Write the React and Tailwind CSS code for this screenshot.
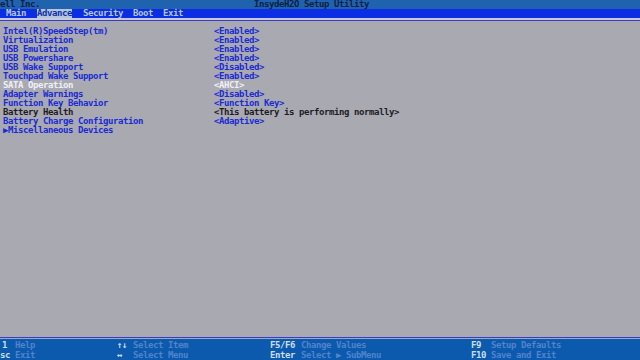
import React from "react";

const rows = [
  { l: "Intel(R)SpeedStep(tm)", v: "<Enabled>" },
  { l: "Virtualization", v: "<Enabled>" },
  { l: "USB Emulation", v: "<Enabled>" },
  { l: "USB Powershare", v: "<Enabled>" },
  { l: "USB Wake Support", v: "<Disabled>" },
  { l: "Touchpad Wake Support", v: "<Enabled>" },
  { l: "SATA Operation", v: "<AHCI>", sel: true },
  { l: "Adapter Warnings", v: "<Disabled>" },
  { l: "Function Key Behavior", v: "<Function Key>" },
  { l: "Battery Health", v: "<This battery is performing normally>", dark: true },
  { l: "Battery Charge Configuration", v: "<Adaptive>" },
];

export default function App() {
  const font = {
    fontFamily: '"DejaVu Sans Mono", "Liberation Mono", monospace',
  };
  return (
    <div
      className="w-[640px] h-[360px] flex flex-col overflow-hidden bg-[#a9a9b2] text-[9px] leading-[9px] font-bold tracking-[-0.42px] whitespace-pre"
      style={font}
    >
      {/* title bar */}
      <div className="h-[9px] bg-[#1f63ae] text-[#0d1f45] flex shrink-0">
        <span className="w-[254px]">ell Inc.</span>
        <span>InsydeH2O Setup Utility</span>
      </div>
      {/* menu bar */}
      <div className="h-[9px] bg-[#0b2ee4] text-[#b4c4e6] flex shrink-0 pl-[6px]">
        <span>Main</span>
        <span className="ml-[11px] bg-[#b3c6de] text-[#1230a6]">Advance</span>
        <span className="ml-[11px]">Security</span>
        <span className="ml-[10px]">Boot</span>
        <span className="ml-[10px]">Exit</span>
      </div>
      <div className="h-[2px] bg-[#c6c8e4] shrink-0" />
      <div className="h-px bg-[#3a3cc4] shrink-0" />
      {/* body */}
      <div className="flex-1 flex flex-col pt-[6px] pl-[3px]">
        {rows.map((r) => (
          <div key={r.l} className="flex h-[9px]">
            <span
              className={
                "w-[211px] " +
                (r.sel ? "text-[#eef0f8]" : r.dark ? "text-[#1c1c24]" : "text-[#1a2bd2]")
              }
            >
              {r.l}
            </span>
            <span
              className={
                r.sel ? "text-[#eef0f8]" : r.dark ? "text-[#1c1c24]" : "text-[#1a2bd2]"
              }
            >
              {r.v}
            </span>
          </div>
        ))}
        <div className="flex h-[9px] text-[#1a2bd2]">
          <span>▶Miscellaneous Devices</span>
        </div>
      </div>
      <div className="h-px bg-[#3a3cc4] shrink-0" />
      <div className="h-px bg-[#9aa8cc] shrink-0" />
      {/* footer */}
      <div className="h-[21px] bg-[#0b5aad] shrink-0 flex flex-col pt-[2px] text-[#5283cc]">
        <div className="flex h-[9px]">
          <span className="w-[117px] flex">
            <span className="w-[15px] pl-[2px] text-[#d0dcf6]">1</span>
            <span>Help</span>
          </span>
          <span className="w-[153px] flex">
            <span className="w-[16px] text-[#d0dcf6]">↑↓</span>
            <span>Select Item</span>
          </span>
          <span className="w-[201px] flex">
            <span className="w-[31px] text-[#d0dcf6]">F5/F6</span>
            <span>Change Values</span>
          </span>
          <span className="flex">
            <span className="w-[20px] text-[#d0dcf6]">F9</span>
            <span>Setup Defaults</span>
          </span>
        </div>
        <div className="flex h-[9px] mt-px">
          <span className="w-[117px] flex">
            <span className="w-[15px] text-[#d0dcf6]">sc</span>
            <span>Exit</span>
          </span>
          <span className="w-[153px] flex">
            <span className="w-[16px] text-[#d0dcf6]">↔</span>
            <span>Select Menu</span>
          </span>
          <span className="w-[201px] flex">
            <span className="w-[31px] text-[#d0dcf6]">Enter</span>
            <span>Select ▶ SubMenu</span>
          </span>
          <span className="flex">
            <span className="w-[20px] text-[#d0dcf6]">F10</span>
            <span>Save and Exit</span>
          </span>
        </div>
      </div>
    </div>
  );
}
